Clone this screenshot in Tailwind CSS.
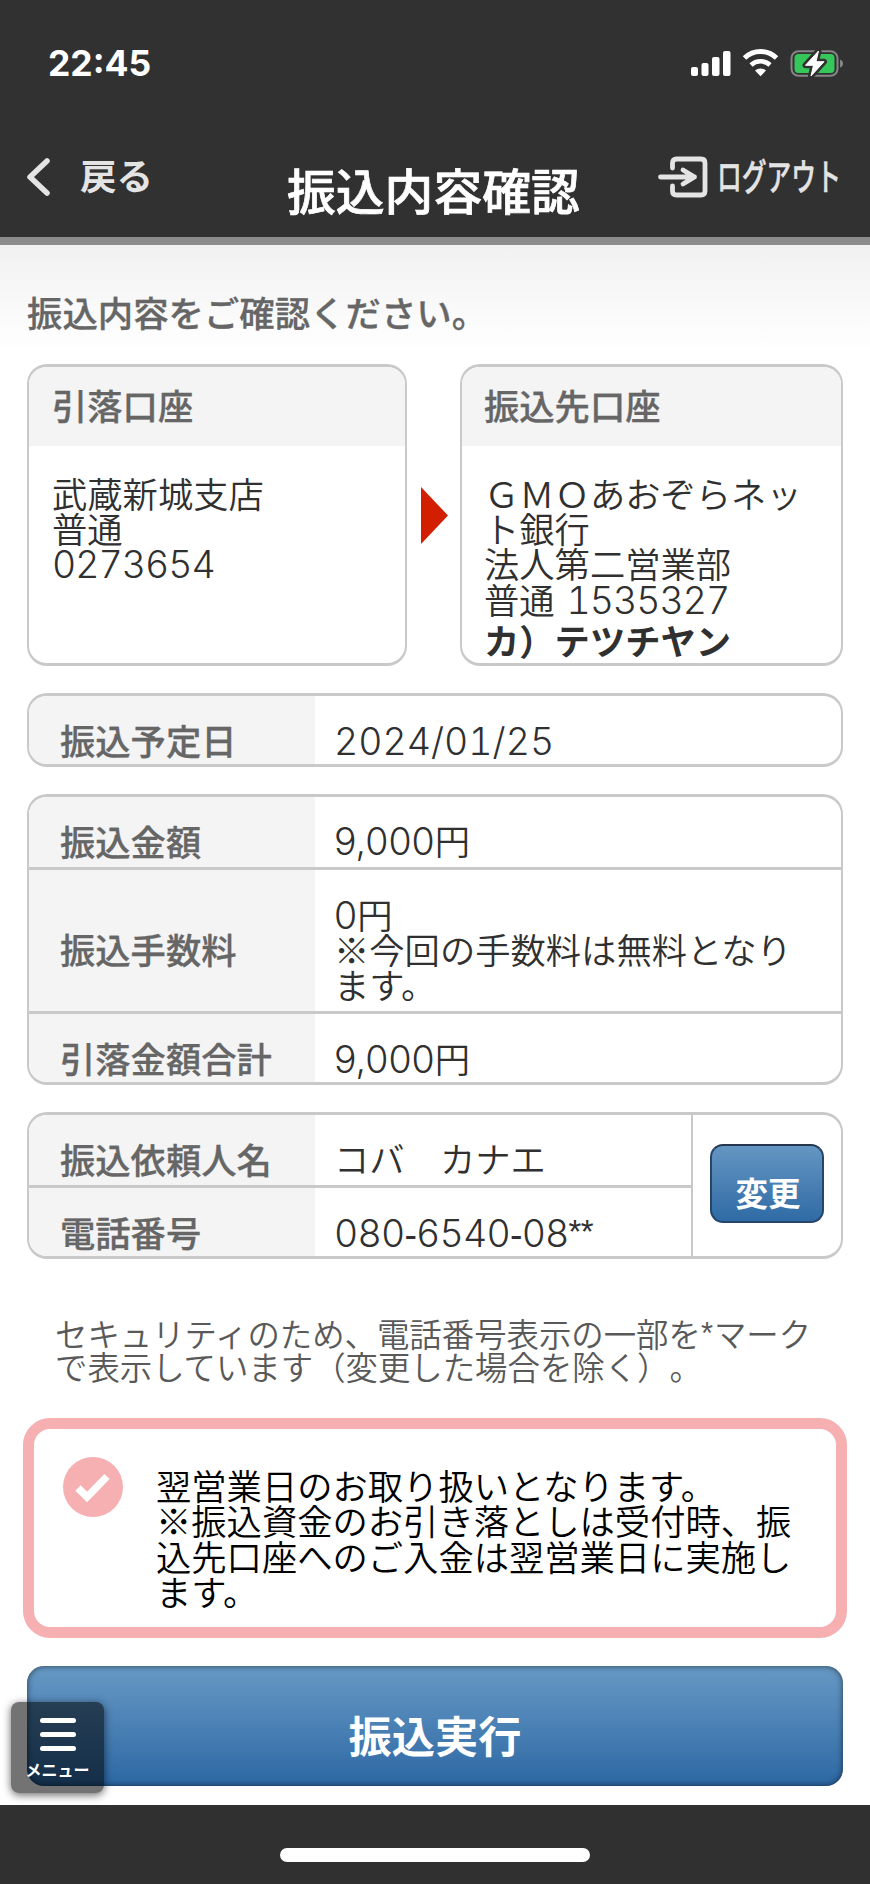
<!DOCTYPE html>
<html lang="ja">
<head>
  <meta charset="UTF-8" />
  <meta name="viewport" content="width=device-width, initial-scale=1.0" />
  <title>振込内容確認</title>
  <script src="https://cdn.jsdelivr.net/npm/@tailwindcss/browser@4"></script>
</head>

<body class="w-[870px] h-[1884px] overflow-hidden bg-white text-[#303030] font-['Noto_Sans_CJK_JP',sans-serif] font-[350] text-[35.3px] leading-[35.2px] whitespace-nowrap [text-spacing-trim:space-all]">

  <!-- Header -->
  <header class="h-[245px] bg-[#313131] border-b-8 border-[#8c8c8c] flex flex-col">

    <!-- Status bar -->
    <div class="h-[126px] flex items-center justify-between pl-[48px] pr-[24px] text-white">
      <span class="pt-[2px] font-[Inter] font-bold text-[35.5px]">22:45</span>
      <svg class="w-[156px] h-[30px]" viewBox="0 0 156 30" fill="none">
        <g fill="#fff">
          <rect x="1" y="19" width="7" height="9" rx="2" />
          <rect x="11.5" y="15" width="7" height="13" rx="2" />
          <rect x="22" y="9" width="7.5" height="19" rx="2" />
          <rect x="33" y="3" width="7.5" height="25" rx="2" />
        </g>
        <path d="M54.500 10a23 23 0 0 1 32 0" stroke="#fff" stroke-width="5" />
        <path d="M61 17a14 14 0 0 1 19 0" stroke="#fff" stroke-width="4.6" />
        <path d="M65 22.6a8 8 0 0 1 11 0l-5.5 5.6z" fill="#fff" />
        <rect x="101.5" y="3.2" width="46" height="24.6" rx="7" stroke="#858585" stroke-width="2" />
        <rect x="104.5" y="6" width="40" height="19" rx="4" fill="#35c759" />
        <path d="M150 11.5q3 1 3 4t-3 4z" fill="#858585" />
        <path d="M128.500 3L115.500 17.300h8L121 28L134 13.700h-8z" fill="#fff" stroke="#313131" stroke-width="6" stroke-linejoin="round" />
        <path d="M128.500 3L115.500 17.300h8L121 28L134 13.700h-8z" fill="#fff" stroke="#fff" stroke-width="1" stroke-linejoin="round" />
      </svg>
    </div>

    <!-- Title bar -->
    <div class="h-[111px] flex items-start pl-[27px] pr-[30px]">
      <a href="#" class="w-[182px] pt-[31px] flex items-center text-[#e4e4e4] font-bold text-[36.500px]">
        <svg class="w-[24px] h-[40px] mr-[29px]" viewBox="0 0 24 40" fill="none" stroke="#e4e4e4" stroke-width="5.500" stroke-linecap="round">
          <path d="M20 4L3 20L20 36" stroke-linejoin="round" />
        </svg>
        <span class="pb-[4px]">戻る</span>
      </a>
      <h1 class="grow pt-[38px] pl-[78px] text-white font-medium text-[48.800px] leading-[50px] [-webkit-text-stroke:0.7px_#fff]">振込内容確認</h1>
      <a href="#" class="w-[182px] pt-[29px] flex items-center text-[#e4e4e4] font-medium [-webkit-text-stroke:0.5px_#e4e4e4]">
        <svg class="w-[52px] h-[44px] mr-[7px] shrink-0" viewBox="0 0 52 44" fill="none" stroke="#e4e4e4" stroke-width="4.800" stroke-linecap="round" stroke-linejoin="round">
          <path d="M14.500 13V8q0-4 4-4H43q4 0 4 4v28q0 4-4 4H18.500q-4 0-4-4v-5" />
          <path d="M2.500 22h34M25 15l11.500 7L25 29" />
        </svg>
        <span class="w-[122px] pb-[3px]"><span class="inline-block origin-left scale-x-[0.67] text-[37px]">ログアウト</span></span>
      </a>
    </div>
  </header>

  <main class="relative h-[1560px] px-[27px]">
    <div class="-mx-[27px] h-[119px] px-[27px] pt-[49px] bg-linear-to-b from-[#f1f1f1] to-white to-90% text-[#666] font-medium [-webkit-text-stroke:0.3px_#666] text-[35.400px]">振込内容をご確認ください。</div>

    <!-- Accounts -->
    <div class="flex items-stretch h-[302px]">
      <section class="w-[380px] border-x-2 border-y-[3px] border-[#c9c9c9] rounded-[20px] overflow-hidden">
        <h2 class="h-[79px] bg-[#f4f4f4] pl-[23px] pt-[20px] text-[#666] font-medium [-webkit-text-stroke:0.3px_#666]">引落口座</h2>
        <p class="pl-[23px] pt-[29px]">武蔵新城支店<br>普通<br><span class="font-[Inter] tabular-nums tracking-[-1px] text-[37.500px] leading-0">0273654</span></p>
      </section>
      <div class="w-[53px] flex items-center pl-[14px]">
        <svg class="w-[27px] h-[57px]" viewBox="0 0 27 57"><path d="M0 0L27 28.500L0 57z" fill="#d11f00" /></svg>
      </div>
      <section class="w-[383px] border-x-2 border-y-[3px] border-[#c9c9c9] rounded-[20px] overflow-hidden">
        <h2 class="h-[79px] bg-[#f4f4f4] pl-[22px] pt-[20px] text-[#666] font-medium [-webkit-text-stroke:0.3px_#666]">振込先口座</h2>
        <p class="pl-[22px] pt-[29px]">ＧＭＯあおぞらネッ<br>ト銀行<br>法人第二営業部<br>普通 <span class="font-[Inter] tabular-nums tracking-[-1px] text-[37.500px] leading-0 ml-[4px]">1535327</span></p>
        <p class="pl-[22px] pt-[6px] font-bold">カ）テツチヤン</p>
      </section>
    </div>

    <!-- Date -->
    <dl class="mt-[27px] h-[74px] flex border-x-2 border-y-[3px] border-[#c9c9c9] rounded-[20px] overflow-hidden">
      <dt class="w-[286px] bg-[#f4f4f4] pl-[31px] pt-[26px] text-[#666] font-medium [-webkit-text-stroke:0.3px_#666]">振込予定日</dt>
      <dd class="pl-[19px] pt-[28px] font-[Inter] tabular-nums text-[37.500px]">2024/01/25</dd>
    </dl>

    <!-- Amounts -->
    <dl class="mt-[27px] h-[291px] flex flex-col border-x-2 border-y-[3px] border-[#c9c9c9] rounded-[20px] overflow-hidden">
      <div class="flex h-[73px] border-b-[3px] border-[#c9c9c9]">
        <dt class="w-[286px] bg-[#f4f4f4] pl-[31px] pt-[26px] text-[#666] font-medium [-webkit-text-stroke:0.3px_#666]">振込金額</dt>
        <dd class="pl-[19px] pt-[25px]"><span class="font-[Inter] text-[37.500px] leading-0">9,000</span>円</dd>
      </div>
      <div class="flex h-[144px] border-b-[3px] border-[#c9c9c9]">
        <dt class="w-[286px] bg-[#f4f4f4] pl-[31px] pt-[61px] text-[#666] font-medium [-webkit-text-stroke:0.3px_#666]">振込手数料</dt>
        <dd class="pl-[19px] pt-[26px]"><span class="font-[Inter] text-[37.500px] leading-0">0</span>円<br>※今回の手数料は無料となり<br>ます。</dd>
      </div>
      <div class="flex grow">
        <dt class="w-[286px] bg-[#f4f4f4] pl-[31px] pt-[26px] text-[#666] font-medium [-webkit-text-stroke:0.3px_#666]">引落金額合計</dt>
        <dd class="pl-[19px] pt-[26px]"><span class="font-[Inter] text-[37.500px] leading-0">9,000</span>円</dd>
      </div>
    </dl>

    <!-- Applicant -->
    <div class="mt-[27px] h-[147px] flex border-x-2 border-y-[3px] border-[#c9c9c9] rounded-[20px] overflow-hidden">
      <dl class="w-[664px] border-r-2 border-[#c9c9c9]">
        <div class="flex h-[73px] border-b-[3px] border-[#c9c9c9]">
          <dt class="w-[286px] bg-[#f4f4f4] pl-[31px] pt-[26px] text-[#666] font-medium [-webkit-text-stroke:0.3px_#666]">振込依頼人名</dt>
          <dd class="pl-[19px] pt-[25px]">コバ　カナエ</dd>
        </div>
        <div class="flex h-[68px]">
          <dt class="w-[286px] bg-[#f4f4f4] pl-[31px] pt-[26px] text-[#666] font-medium [-webkit-text-stroke:0.3px_#666]">電話番号</dt>
          <dd class="pl-[19px] pt-[28px] font-[Inter] tabular-nums tracking-[-0.8px] text-[37.500px]">080<span class="font-['Liberation_Sans'] leading-0">-</span>6540<span class="font-['Liberation_Sans'] leading-0">-</span>08<span class="font-['Liberation_Sans'] text-[33px] leading-0 align-[4px]">**</span></dd>
        </div>
      </dl>
      <button class="ml-[17px] mt-[29px] w-[114px] h-[79px] pt-[20px] pl-[2px] flex items-start justify-center rounded-[13px] border-2 border-[#27456b] border-t-[#26364d] bg-linear-to-b from-[#6496c2] to-[#2f6ba5] text-white font-bold text-[32.500px] leading-[52px]">変更</button>
    </div>

    <p class="mt-[57px] pl-[28px] text-[32.400px] leading-[33px] text-[#595959]">セキュリティのため、電話番号表示の一部を<span class="inline-block w-[13px] font-['Liberation_Sans'] text-[31px] leading-0 align-[3px]">*</span>マーク<br>で表示しています（変更した場合を除く）。</p>

    <!-- Notice -->
    <div class="-mx-[4px] mt-[36px] h-[220px] flex border-[11px] border-[#f7b0b2] rounded-[27px] text-black">
      <svg class="ml-[29px] mt-[28px] w-[60px] h-[60px]" viewBox="0 0 60 60">
        <circle cx="30" cy="30" r="30" fill="#f7b0b2" />
        <path d="M15 31L24 40L44 19.500" fill="none" stroke="#fff" stroke-width="7.500" />
      </svg>
      <p class="pl-[33px] pt-[38px] leading-[35.300px]">翌営業日のお取り扱いとなります。<br>※振込資金のお引き落としは受付時、振<br>込先口座へのご入金は翌営業日に実施し<br>ます。</p>
    </div>

    <button class="mt-[28px] w-[816px] h-[120px] pt-[15px] flex items-center justify-center rounded-[17px] bg-linear-to-b from-[#6799c4] to-[#2c68a4] shadow-[inset_0_0_6px_rgba(0,0,0,0.6)] text-white font-bold text-[43.200px] leading-[44px]">振込実行</button>

    <!-- Floating menu -->
    <a href="#" class="absolute left-[11px] top-[1457px] w-[93px] h-[91px] pt-[16px] flex flex-col items-center rounded-[8px] bg-black/55 shadow-[0_2px_9px_rgba(0,0,0,0.6)] text-white font-bold text-[16px] leading-[20px]">
      <span class="w-[36px] h-[5px] rounded-full bg-white"></span>
      <span class="mt-[9px] w-[36px] h-[5px] rounded-full bg-white"></span>
      <span class="mt-[9px] w-[36px] h-[5px] rounded-full bg-white"></span>
      <span class="mt-[8px]">メニュー</span>
    </a>
  </main>

  <footer class="h-[79px] bg-[#303030] flex justify-center pt-[43px]">
    <div class="w-[310px] h-[14px] rounded-full bg-white"></div>
  </footer>

</body>
</html>
